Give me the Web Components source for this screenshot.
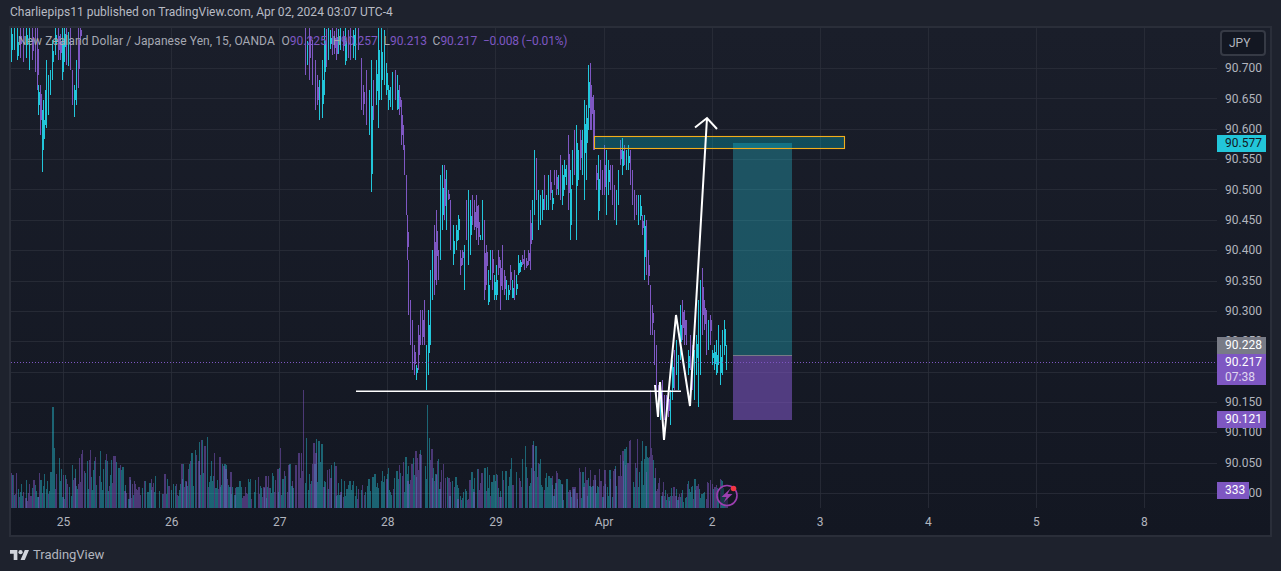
<!DOCTYPE html>
<html lang="en"><head><meta charset="utf-8"><title>NZDJPY</title>
<style>
html,body{margin:0;padding:0;background:#1e222d}
body{font:12px Roboto,"Liberation Sans",sans-serif;color:#b2b5be;overflow:hidden}
</style></head>
<body>
<tv-snapshot>
  <tv-header slot="header">Charliepips11 published on TradingView.com, Apr 02, 2024 03:07 UTC-4</tv-header>
  <tv-chart slot="chart"></tv-chart>
  <tv-footer slot="footer">TradingView</tv-footer>
</tv-snapshot>
<script>
function shadow(el,html){const r=el.attachShadow({mode:'open'});r.innerHTML=html;return r;}

class TvSnapshot extends HTMLElement{constructor(){super();shadow(this,`<style>
:host{display:flex;flex-direction:column;width:1281px;height:571px;background:#1e222d}
</style><slot name="header"></slot><slot name="chart"></slot><slot name="footer"></slot>`);}}

class TvHeader extends HTMLElement{constructor(){super();shadow(this,`<style>
:host{display:flex;align-items:center;height:26px;padding:0 10px 2px;box-sizing:border-box;font-size:12px;letter-spacing:.03px;color:#b8bbc4;white-space:nowrap;flex:none}
</style><slot></slot>`);}}

class TvFooter extends HTMLElement{constructor(){super();shadow(this,`<style>
:host{display:flex;align-items:center;gap:4px;height:34px;padding:0 10px;box-sizing:border-box;font-size:13px;color:#b2b5be;flex:none;letter-spacing:-.02px}
svg{width:19px;height:11px;display:block;fill:#d1d4dc}
</style><svg viewBox="0 0 36 21" preserveAspectRatio="none"><path d="M14 21H7V9H0V2h14v19zM28 21h-8L28 2h8l-8 19z"/><circle cx="20" cy="6" r="4"/></svg><slot></slot>`);}}

class TvChart extends HTMLElement{constructor(){super();shadow(this,`<style>
:host{display:grid;grid-template-columns:1206px 53px;grid-template-rows:480px 27px;position:relative;margin:0 9px;border:2px solid #2a2e39;flex:none;width:1259px;height:507px;background:linear-gradient(#1a1e2a,#131722)}
</style>
<tv-plot></tv-plot>
<tv-price-axis></tv-price-axis>
<tv-time-axis></tv-time-axis>
<div></div>
<tv-legend></tv-legend>`);}}

class TvLegend extends HTMLElement{constructor(){super();shadow(this,`<style>
:host{position:absolute;left:7px;top:6px;display:flex;gap:5.700px;white-space:nowrap;font-size:12px;line-height:15px;color:#a5a8b2}
span{color:#7e57c2}
.name{letter-spacing:.07px;margin-right:1px}
.chg{letter-spacing:-.2px}
</style><div class="name">New Zealand Dollar / Japanese Yen, 15, OANDA</div>
<div>O<span>90.225</span></div><div>H<span>90.257</span></div><div>L<span>90.213</span></div><div>C<span>90.217</span></div>
<div class="chg"><span>−0.008 (−0.01%)</span></div>`);}}

const ENV=[[11,28,62],[14,28,50],[17,28,60],[20,28,58],[23,28,62],[26,28,58],[29,28,70],[32,28,60],[35,28,72],[37,28,90],[38,85,115],[40,85,135],[41.5,110,172],[43,100,150],[45,90,125],[46,60,128],[48,75,115],[50,70,95],[52,40,80],[55,28,55],[58,28,60],[62,28,80],[66,28,65],[70,28,70],[72,70,105],[74,85,117],[76,60,105],[78,28,88],[80,28,40],
null,
[305,28,75],[309,28,80],[312,40,85],[315,60,110],[317,75,105],[319,80,120],[322,60,118],[324,28,95],[328,28,60],[332,28,55],[336,28,60],[340,28,50],[345,28,65],[350,28,60],[355,28,60],[358,28,50],[361,58,110],[363,85,115],[366,70,125],[369,90,135],[371,60,192],[373,80,120],[376,60,105],[378,28,128],[381,28,100],[384,30,85],[388,85,110],[392,72,110],[395,70,100],[397,75,110],[399,85,115],[401,100,145],[403,125,150],[404,145,175],[406,175,215],[407,215,260],[408,260,315],[410,300,345],[412,320,370],[414,345,375],[416,365,380],[418,325,370],[420,310,345],[422,310,345],[424,300,345],[426,345,390],[428,310,375],[430,270,345],[432,250,300],[434,225,295],[436,210,285],[438,250,280],[440,175,260],[442,165,230],[444,165,220],[446,170,230],[448,190,200],[450,200,250],[453,225,265],[456,225,250],[458,215,240],[460,250,275],[462,250,265],[464,245,290],[466,200,240],[468,190,265],[470,200,255],[472,195,225],[474,200,230],[476,195,240],[478,205,245],[480,235,240],[482,200,240],[484,220,300],[486,245,285],[488,270,305],[490,250,280],[492,250,290],[494,275,300],[496,265,300],[498,250,275],[500,260,310],[502,245,290],[504,270,295],[506,280,300],[508,285,300],[510,265,290],[512,280,298],[514,270,300],[516,275,295],[518,255,275],[520,260,272],[522,255,265],[524,250,270],[526,258,268],[528,250,265],[530,210,270],[532,200,240],[534,150,215],[536,158,200],[538,190,230],[540,195,225],[542,190,220],[544,175,210],[546,195,210],[548,175,210],[550,170,200],[552,190,210],[554,170,185],[556,170,195],[558,175,195],[560,155,200],[562,165,205],[564,160,190],[566,165,185],[568,135,210],[570,170,240],[572,150,185],[574,130,175],[576,125,240],[578,150,180],[580,130,170],[582,130,175],[584,100,200],[586,105,180],[588,65,130],[590,63,130],[591,85,130],[593,95,150],[594,130,150],[596,165,190],[598,155,220],[600,160,190],[602,170,195],[604,145,195],[606,150,215],[608,160,195],[610,165,190],[612,165,205],[614,185,220],[616,190,225],[618,170,205],[620,140,165],[622,138,175],[624,145,165],[626,150,170],[628,145,170],[630,150,185],[632,170,205],[634,190,220],[636,195,215],[638,195,225],[640,195,220],[642,215,235],[644,215,280],[646,220,275],[648,250,285],[650,285,335],[652,305,335],[654,330,365],[656,345,400],[658,385,415],[660,385,420],[662,380,410],[664,395,420],[666,395,420],[668,395,417],[670,390,425],[672,360,400],[674,350,390],[676,340,375],[678,355,390],[680,305,360],[682,300,340],[684,310,345],[686,320,345],[688,350,375],[690,335,370],[692,345,390],[694,350,400],[696,335,375],[698,300,407],[700,280,375],[702,268,335],[704,300,330],[706,310,355],[708,320,350],[710,315,345],[712,350,365],[714,345,370],[716,340,375],[718,325,365],[720,345,385],[722,330,375],[724,320,355],[726,345,370]];

function rng(a){return function(){a|=0;a=a+0x6D2B79F5|0;let t=Math.imul(a^a>>>15,1|a);t=t+Math.imul(t^t>>>7,61|t)^t;return((t^t>>>14)>>>0)/4294967296;}}

function candlePaths(){
  const r=rng(77);let cy='',pu='';
  const add=(x,t,b,up)=>{
    const X=Math.round(x),T=Math.round(t),H=Math.max(1,Math.round(b-t));
    const range=b-t,bt=t+range*(0.15+r()*0.3),bh=Math.max(2,range*(0.25+r()*0.3));
    const wide=r()<.5;
    let s=`M${X} ${T}h1v${H}h-1z`;
    if(wide)s+=`M${X} ${Math.round(bt)}h2v${Math.round(bh)}h-2z`;
    if(up)cy+=s;else pu+=s;
  };
  for(let i=0;i<ENV.length;i++){
    const e=ENV[i];if(!e)continue;
    const n=ENV[i+1];
    const cN=n?(n[1]+n[2])/2:(e[1]+e[2])/2,c=(e[1]+e[2])/2;
    let up=cN<c-1?true:cN>c+1?false:r()<.5;
    if(r()<.18)up=!up;
    add(e[0],e[1],e[2],up);
    if(n&&n[0]-e[0]>=3.5){
      const m=(e[0]+n[0])/2,tt=(e[1]+n[1])/2,bb=(e[2]+n[2])/2,rg=bb-tt;
      add(m,tt+rg*r()*.3,bb-rg*r()*.3,r()<.55);
    }
  }
  return{cy,pu};
}

function volumePaths(){
  const r=rng(2024);let te='',pu='';
  const spikes={31:65,52:101,53:101,54:60,59:50,303:118,306:70,427:103,429:70,650:118,651:60,722:38,105:48,170:45,191:55,280:60};
  const purpleSpikes={303:1,650:1,651:1};
  const cycle=x=>{const d=((x-64)%108.1+108.1)%108.1/108.1;
    return .28+.72*Math.pow(Math.sin(Math.PI*Math.min(1,d*1.35+.1)),2)+(d>.75?.2:0);};
  for(let x=11;x<727;x++){
    if(r()<.16)continue;
    let h=(9+42*cycle(x))*(.35+r()*1.05);
    if(spikes[x])h=spikes[x];
    if(x>646&&x<654&&!spikes[x])h=40+r()*15;
    if(x>655)h*=.72;
    const w=r()<.25?2:1,X=`M${x} ${508-Math.round(h)}h${w}V508h-${w}z`;
    const teal=purpleSpikes[x]?false:spikes[x]&&x!=280?true:x<640?r()<.55:r()<.45;
    if(teal)te+=X;else pu+=X;
  }
  return{te,pu};
}

class TvPlot extends HTMLElement{constructor(){super();
  let grid='';
  for(let i=0;i<15;i++){const y=Math.round(68+i*30.36)+.5;grid+=`M11 ${y}H1217`;}
  for(let i=0;i<11;i++){const x=Math.round(64+i*108.1)-.5;grid+=`M${x} 28V508`;}
  const c=candlePaths(),v=volumePaths();
  shadow(this,`<style>
:host{display:block;width:1206px;height:480px}
svg{display:block;width:1206px;height:480px}
</style>
<svg viewBox="11 28 1206 480">
<path d="${grid}" stroke="#2a2e39" stroke-opacity=".8" fill="none"/>
<g shape-rendering="crispEdges"><path d="${v.te}" fill="#26c6da" fill-opacity=".44"/><path d="${v.pu}" fill="#7e57c2" fill-opacity=".52"/>
<path d="${c.pu}" fill="#7e57c2"/><path d="${c.cy}" fill="#22c6da"/></g>
<path d="M11 362.5H1217" stroke="#7e57c2" stroke-dasharray="1 2" fill="none"/>
<rect x="733" y="143" width="59" height="212" fill="#26c6da" fill-opacity=".33"/>
<rect x="733" y="356" width="59" height="64" fill="#7e57c2" fill-opacity=".58"/>
<path d="M733 355.5H792" stroke="#787b86" stroke-width="1" fill="none"/>
<rect x="594.500" y="136.500" width="250" height="12" fill="#00bcd4" fill-opacity=".3" stroke="#f2ae1c" stroke-width="1.100"/>
<path d="M356 391.2H681" stroke="#fff" stroke-width="1.5" fill="none"/>
<path d="M655 385L658 417L660 382L664 440L676 315L690 406L707 118M695 127.500L707 118L717 129" stroke="#fff" stroke-width="2" fill="none" stroke-linejoin="miter"/>
<circle cx="727" cy="495.500" r="10" fill="#131722" fill-opacity=".55" stroke="#9c3fb0" stroke-width="1.600"/>
<path d="M730.500 488.500L721.500 497H726.500L723.500 502.500L732.500 494H727.500Z" fill="#9c3fb0"/>
<circle cx="733.500" cy="488.500" r="2.800" fill="#f23645"/>
</svg>`);}}

class TvPriceTag extends HTMLElement{
  constructor(){super();shadow(this,`<style>
:host{position:absolute;left:0;display:flex;flex-direction:column;justify-content:center;width:49px;padding-left:8px;box-sizing:border-box;background:var(--bg,#7e57c2);color:var(--fg,#fff);font-size:12px;line-height:15px;white-space:nowrap;height:17px}
</style><slot></slot>`);}}

class TvPriceAxis extends HTMLElement{constructor(){super();
  const prices=['90.700','90.650','90.600','90.550','90.500','90.450','90.400','90.350','90.300','90.250','','90.150','90.100','90.050','90.000'];
  shadow(this,`<style>
:host{display:block;position:relative;width:53px;height:480px;overflow:visible;font-size:12px;color:#b2b5be}
.rows{display:flex;flex-direction:column;padding:25.500px 0 0 8px}
.rows div{height:30.360px;display:flex;align-items:center;line-height:15px}
.btn{position:absolute;left:3px;top:2px;width:46px;height:26px;box-sizing:border-box;border:2px solid #363a45;border-radius:4px;background:#131722;display:flex;align-items:center;padding-left:7px;color:#b2b5be}
.small{opacity:.75}
</style>
<div class="rows">${prices.map(p=>`<div>${p}</div>`).join('')}</div>
<div class="btn">JPY</div>
<tv-price-tag style="top:107px;--bg:#22c6da;--fg:#131722">90.577</tv-price-tag>
<tv-price-tag style="top:309px;--bg:#787b86">90.228</tv-price-tag>
<tv-price-tag style="top:326px;height:31px">90.217<span class="small">07:38</span></tv-price-tag>
<tv-price-tag style="top:383px">90.121</tv-price-tag>
<tv-price-tag style="top:454px;width:32px">333</tv-price-tag>`);}}

class TvTimeAxis extends HTMLElement{constructor(){super();
  const labels=['25','26','27','28','29','Apr','2','3','4','5','8'];
  shadow(this,`<style>
:host{display:flex;height:27px;align-items:center;margin-left:-1.500px;font-size:12px;color:#b2b5be}
div{flex:none;width:108.100px;text-align:center}
</style>${labels.map(l=>`<div>${l}</div>`).join('')}`);}}

customElements.define('tv-header',TvHeader);
customElements.define('tv-footer',TvFooter);
customElements.define('tv-legend',TvLegend);
customElements.define('tv-plot',TvPlot);
customElements.define('tv-price-tag',TvPriceTag);
customElements.define('tv-price-axis',TvPriceAxis);
customElements.define('tv-time-axis',TvTimeAxis);
customElements.define('tv-chart',TvChart);
customElements.define('tv-snapshot',TvSnapshot);
</script>
</body></html>
